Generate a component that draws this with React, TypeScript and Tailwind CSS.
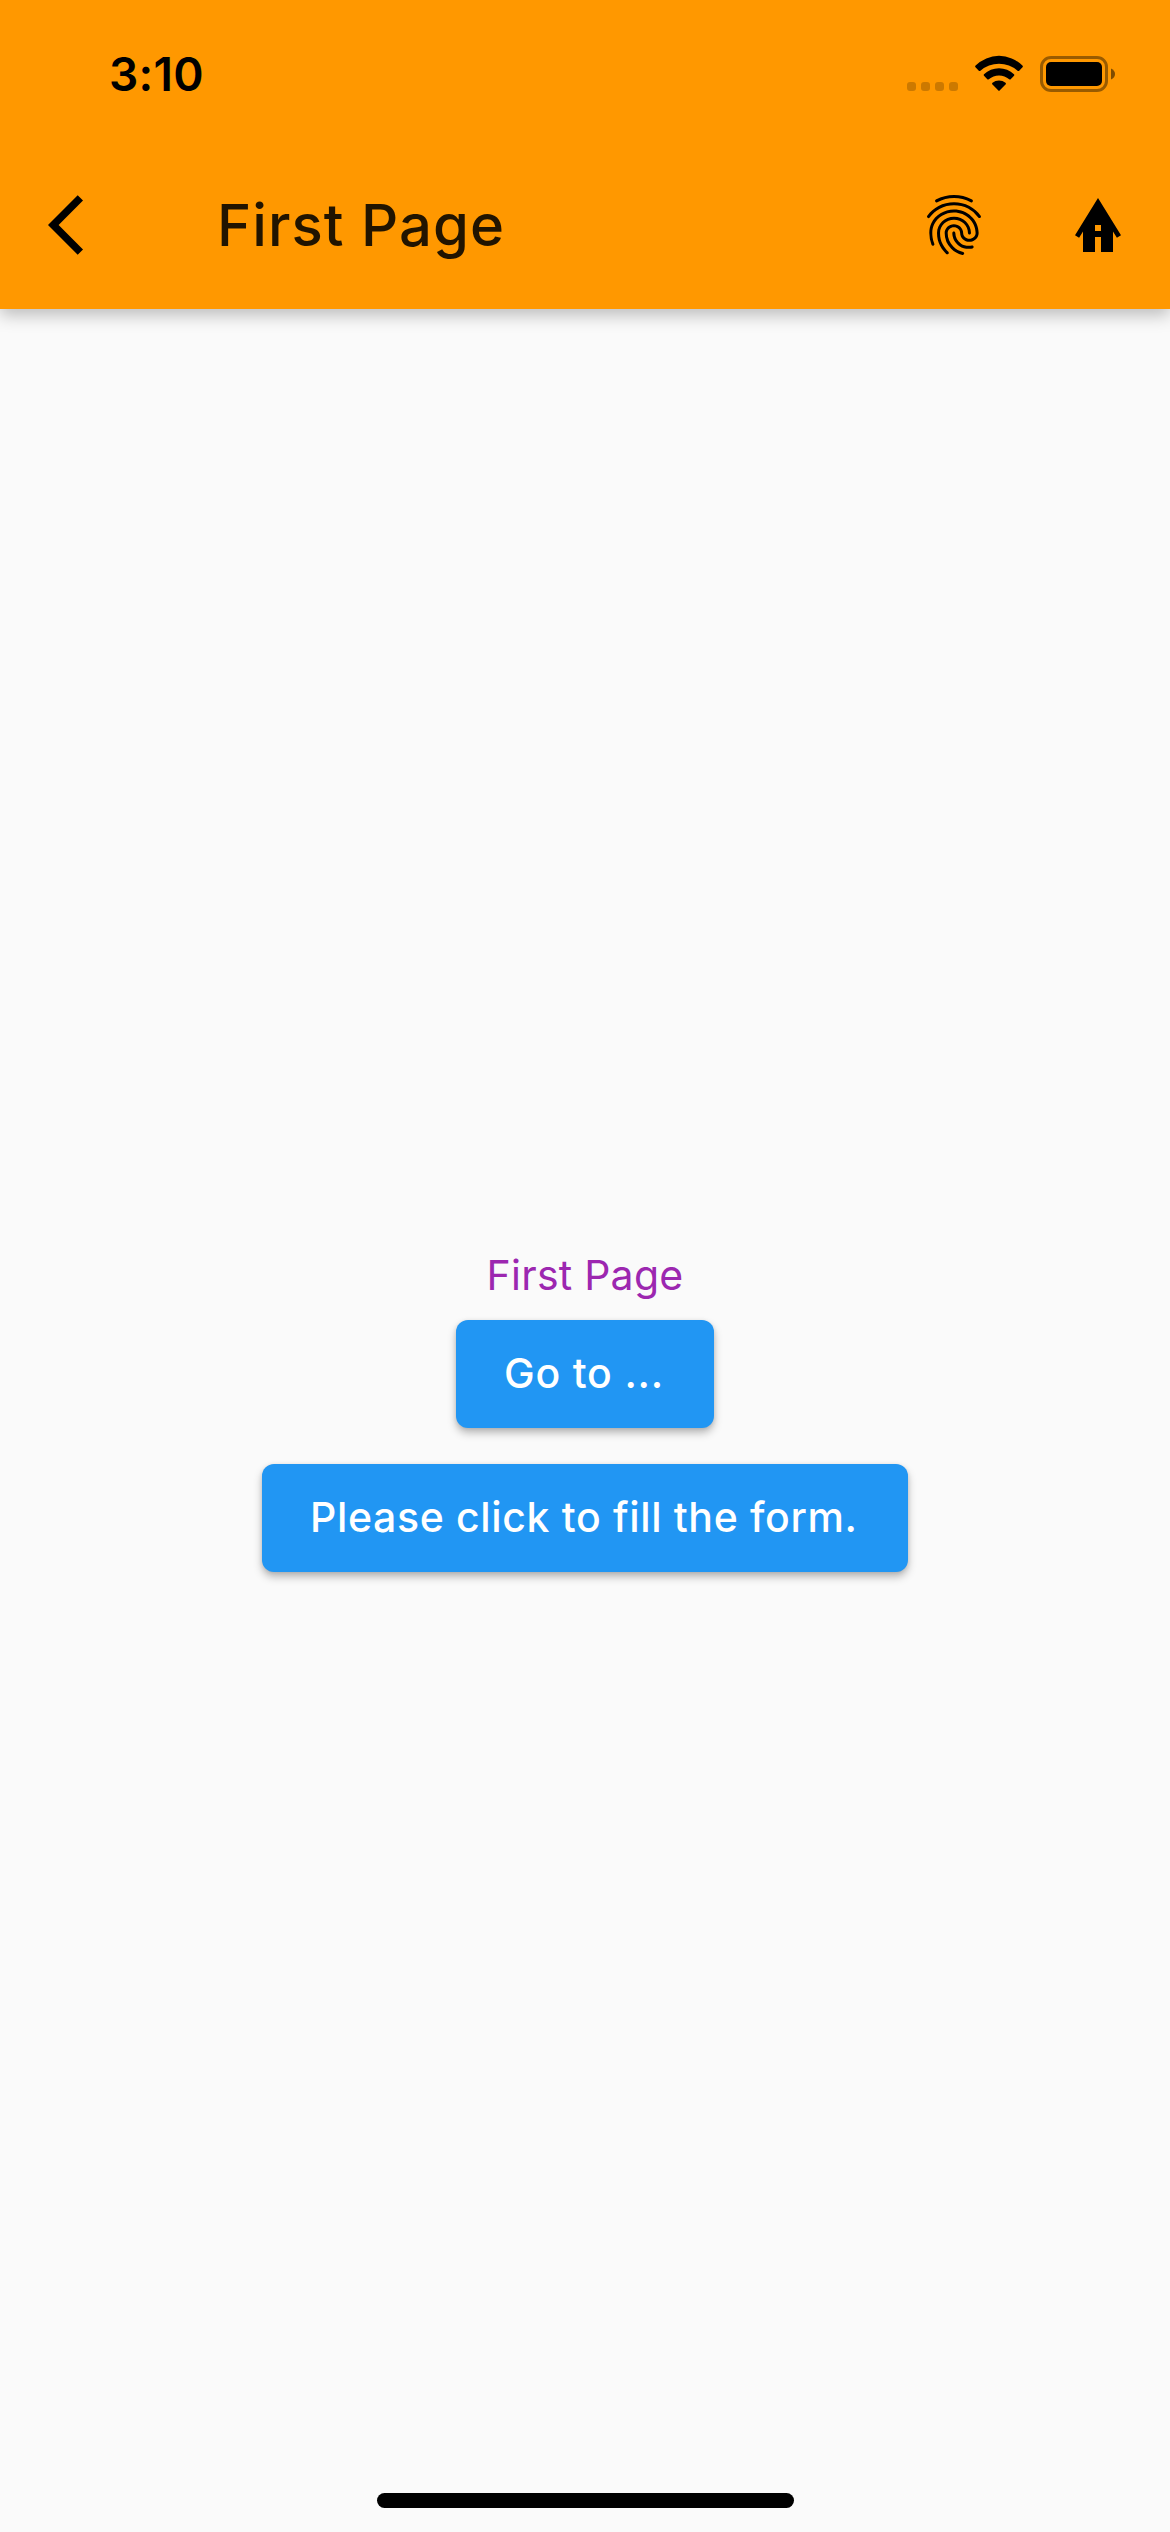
import type { ReactNode } from "react";
import { MdFingerprint } from "react-icons/md";

function SignalDots() {
  return (
    <div className="mt-[26px] flex gap-[5px]">
      {[0, 1, 2, 3].map((i) => (
        <span key={i} className="size-[9px] rounded-[3px] bg-black/20" />
      ))}
    </div>
  );
}

function WifiIcon() {
  return (
    <svg width="48" height="36" viewBox="5 5 48 36" className="-mt-px" aria-label="Wi-Fi">
      <path d="M5.6 15.6A33 33 0 0 1 52.4 15.6Q53.3 16.4 52.5 17.2L49.2 20.7Q48.4 21.4 47.6 20.7A28 28 0 0 0 10.4 20.7Q9.6 21.4 8.8 20.7L5.5 17.2Q4.7 16.4 5.6 15.6Z" />
      <path d="M14 24.2A21.6 21.6 0 0 1 44 24.2Q44.8 25 44 25.8L40.7 29.2Q40 30 39.2 29.2A15.6 15.6 0 0 0 18.8 29.2Q18 30 17.3 29.2L14 25.8Q13.2 25 14 24.2Z" />
      <path d="M22.5 32.8A10 10 0 0 1 35.5 32.8Q36.4 33.6 35.5 34.5L29.6 40.6Q29 41.2 28.4 40.6L22.5 34.5Q21.6 33.6 22.5 32.8Z" />
    </svg>
  );
}

function BatteryIcon() {
  return (
    <svg width="75" height="36" viewBox="0 0 75 36" aria-label="Battery">
      <rect x="1.5" y="1.5" width="65" height="33" rx="9.5" fill="none" stroke="black" strokeOpacity="0.4" strokeWidth="3" />
      <rect x="6" y="6" width="56" height="24" rx="5" />
      <path d="M71 12.5Q75 14.5 75 18T71 23.5Z" fillOpacity="0.5" />
    </svg>
  );
}

function StatusBar() {
  return (
    <div className="flex h-[141px] items-start justify-between pt-14 pr-[55px] pl-[109px]">
      <span className="-mt-[10px] text-[46px] leading-[56px] font-semibold tracking-[0.3px]">3:10</span>
      <div className="flex items-start gap-[17px]">
        <SignalDots />
        <WifiIcon />
        <BatteryIcon />
      </div>
    </div>
  );
}

function BackIcon() {
  return (
    <svg width="72" height="72" viewBox="0 0 24 24" aria-label="Back">
      <path d="M11.67 3.87L9.9 2.1 0 12l9.9 9.9 1.77-1.77L3.54 12z" />
    </svg>
  );
}

function HomeIcon() {
  return (
    <svg width="72" height="72" viewBox="0 0 72 72" aria-label="Home">
      <path
        fillRule="evenodd"
        d="M36 9L59 46.2 54.9 48.7 51 42.5V63H39V48H33V63H21V42.5L17.1 48.7 13 46.2ZM33 36V42H39V36Z"
      />
    </svg>
  );
}

function AppBar() {
  return (
    <header className="relative h-[309px] shrink-0 bg-[#ff9800] text-black shadow-[0_6px_16px_rgba(0,0,0,0.25)]">
      <StatusBar />
      <div className="flex h-[168px] items-center px-9">
        <div className="ml-3">
          <BackIcon />
        </div>
        <h1 className="ml-[97px] flex-1 text-[58px] leading-[72px] font-medium tracking-[1.05px] text-black/87">
          First Page
        </h1>
        <div className="flex gap-[72px]">
          <MdFingerprint className="size-[72px]" />
          <HomeIcon />
        </div>
      </div>
    </header>
  );
}

function ElevatedButton({ className, children }: { className: string; children: ReactNode }) {
  return (
    <button
      className={`my-[18px] h-[108px] rounded-xl bg-[#2196f3] pb-[2px] pl-12 text-left text-[41px] leading-[50px] font-medium whitespace-nowrap text-white shadow-[0_5px_8px_rgba(0,0,0,0.26),0_1px_4px_rgba(0,0,0,0.1)] ${className}`}
    >
      {children}
    </button>
  );
}

export default function App() {
  return (
    <div className="flex h-[2532px] w-[1170px] flex-col overflow-hidden bg-[#fafafa] font-['Inter',sans-serif]">
      <AppBar />
      <main className="flex flex-1 flex-col items-center justify-center pt-[58px]">
        <p className="pb-[3px] text-[41px] leading-[48px] tracking-[0.24px] text-[#9c27b0]">First Page</p>
        <ElevatedButton className="w-[258px] tracking-[0.8px]">Go to ...</ElevatedButton>
        <ElevatedButton className="w-[646px] tracking-[0.645px]">Please click to fill the form.</ElevatedButton>
      </main>
      <footer className="flex h-[58px] shrink-0 items-start justify-center pt-[19px]">
        <div className="h-[15px] w-[417px] rounded-full bg-black" />
      </footer>
    </div>
  );
}
